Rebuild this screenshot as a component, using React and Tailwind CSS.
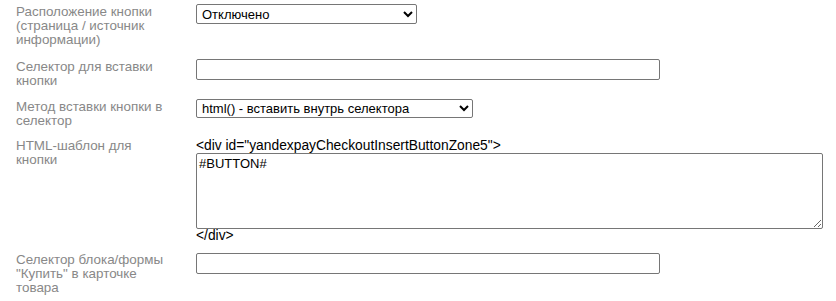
import React from 'react';

const labelCls = 'w-[150px] shrink-0 text-[13.4px] leading-[14px] text-[#888888] whitespace-nowrap';
const boxCls = 'block border border-[#767676] rounded-[2px] bg-white text-[13px] text-black';

export default function App() {
  return (
    <div
      className="w-[836px] h-[301px] bg-white overflow-hidden pt-[4px] text-[13px] leading-[14px]"
      style={{ fontFamily: '"Liberation Sans", Arial, sans-serif' }}
    >
      <div className="flex gap-[30px] pl-4">
        <div className={`${labelCls} pt-[1px]`}>
          Расположение кнопки<br />(страница / источник<br />информации)
        </div>
        <select defaultValue="off" className={`${boxCls} w-[221px] h-[20px] pl-[1px]`}>
          <option value="off">Отключено</option>
        </select>
      </div>

      <div className="flex gap-[30px] pl-4 mt-[12px]">
        <div className={`${labelCls} pt-[1px]`}>
          Селектор для вставки<br />кнопки
        </div>
        <input type="text" className={`${boxCls} w-[464px] h-[21px] px-1`} />
      </div>

      <div className="flex gap-[30px] pl-4 mt-[11px]">
        <div className={`${labelCls} pt-[1px]`}>
          Метод вставки кнопки в<br />селектор
        </div>
        <select defaultValue="html" className={`${boxCls} w-[277px] h-[19px] pl-[1px]`}>
          <option value="html">html() - вставить внутрь селектора</option>
        </select>
      </div>

      <div className="flex gap-[30px] pl-4 mt-[11px]">
        <div className={labelCls}>
          HTML-шаблон для<br />кнопки
        </div>
        <div className="flex flex-col text-black text-[13.8px] leading-[14px]">
          <div className="h-[14px]">&lt;div id="yandexpayCheckoutInsertButtonZone5"&gt;</div>
          <textarea
            defaultValue="#BUTTON#"
            className={`${boxCls} w-[627px] h-[76px] px-[2px] py-[2px] leading-[15px] text-[12.6px]`}
          />
          <div className="h-[14px]">&lt;/div&gt;</div>
        </div>
      </div>

      <div className="flex gap-[30px] pl-4 mt-[10px]">
        <div className={labelCls}>
          Селектор блока/формы<br />"Купить" в карточке<br />товара
        </div>
        <input type="text" className={`${boxCls} w-[464px] h-[21px] px-1`} />
      </div>
    </div>
  );
}
